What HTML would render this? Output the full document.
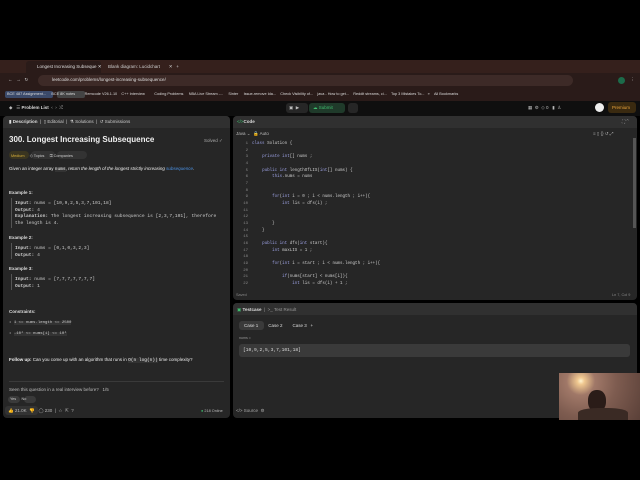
<!DOCTYPE html><html><head><style>
*{margin:0;padding:0;box-sizing:border-box}
body{width:640px;height:480px;background:#000;position:relative;overflow:hidden;font-family:"Liberation Sans",sans-serif;color:#ddd}
.a{position:absolute;white-space:nowrap}
.m{font-family:"Liberation Mono",monospace}
.p{background:#262626;border-radius:4px}
.t{font-size:4.5px}
</style></head><body>
<!-- browser chrome -->
<div class="a" style="left:0;top:60px;width:640px;height:13px;background:#35201c"></div>
<div class="a" style="left:26px;top:61px;width:75px;height:12px;background:#2a1b19;border-radius:3px 3px 0 0"></div>
<div class="a t" style="left:37px;top:64px;color:#ddd">Longest Increasing Subseque ✕</div>
<div class="a t" style="left:108px;top:64px;color:#ccc">Blank diagram: Lucidchart &nbsp;&nbsp;&nbsp;&nbsp;&nbsp;&nbsp;✕ &nbsp;&nbsp;+</div>
<div class="a" style="left:0;top:73px;width:640px;height:16px;background:#2a1b19"></div>
<div class="a" style="left:38px;top:75px;width:535px;height:11px;background:#3d2a27;border-radius:6px"></div>
<div class="a t" style="left:8px;top:77px;color:#ccc">←&nbsp;&nbsp;&nbsp;→&nbsp;&nbsp;&nbsp;↻</div>
<div class="a t" style="left:52px;top:77px;color:#ddd">leetcode.com/problems/longest-increasing-subsequence/</div>
<div class="a t" style="left:630px;top:77px;color:#ccc">⋮</div>
<div class="a" style="left:618px;top:77px;width:7px;height:7px;border-radius:50%;background:#1c6b4a"></div>
<div class="a" style="left:0;top:89px;width:640px;height:12px;background:#2a1b19"></div>
<div class="a" style="left:5px;top:91px;width:48px;height:7px;background:#3b4a6a;border-radius:2px"></div>
<div class="a" style="left:57px;top:91px;width:28px;height:7px;background:#444;border-radius:2px"></div>
<div class="a" style="font-size:3.8px;top:92px;left:7px;color:#ddd">BCE 487 Assignment... &nbsp;&nbsp;&nbsp;&nbsp;BCE 8K notes &nbsp;&nbsp;&nbsp;&nbsp;&nbsp;&nbsp;&nbsp;&nbsp;Remcode V26.1.10 &nbsp;&nbsp;&nbsp;C++ Interview &nbsp;&nbsp;&nbsp;&nbsp;&nbsp;&nbsp;&nbsp;&nbsp;Coding Problems &nbsp;&nbsp;&nbsp;&nbsp;NBA Live Stream -... &nbsp;&nbsp;&nbsp;&nbsp;Sinter &nbsp;&nbsp;&nbsp;&nbsp;Issue-remove Ida... &nbsp;&nbsp;&nbsp;Check Visibility of... &nbsp;&nbsp;&nbsp;java - How to get... &nbsp;&nbsp;&nbsp;Reddit streams, ci... &nbsp;&nbsp;&nbsp;Top 3 Mistakes To... &nbsp;&nbsp;» &nbsp;&nbsp;&nbsp;All Bookmarks</div>
<!-- leetcode topbar -->
<div class="a" style="left:0;top:101px;width:640px;height:15px;background:#0f0f0f"></div>
<div class="a t" style="left:9px;top:105px;color:#bbb">◆ &nbsp;&nbsp;☰ <b style="color:#ddd">Problem List</b> &nbsp;‹ &nbsp;› &nbsp;⤮</div>
<div class="a" style="left:286px;top:103px;width:22px;height:10px;background:#262626;border-radius:3px"></div>
<div class="a" style="left:309px;top:103px;width:36px;height:10px;background:#1f3a2a;border-radius:3px"></div>
<div class="a t" style="left:289px;top:105px;color:#bbb">▣ &nbsp;▶</div>
<div class="a t" style="left:313px;top:105px;color:#3fbf6f">☁ Submit</div>
<div class="a" style="left:348px;top:103px;width:10px;height:10px;background:#262626;border-radius:3px"></div>
<div class="a t" style="left:528px;top:105px;color:#bbb">▦ &nbsp;⚙ &nbsp;◇ 0 &nbsp;&nbsp;▮ &nbsp;♙</div>
<div class="a" style="left:595px;top:103px;width:9px;height:9px;background:#eee;border-radius:50%"></div>
<div class="a" style="left:608px;top:102px;width:28px;height:11px;background:#3a2a10;border-radius:3px"></div>
<div class="a t" style="left:612px;top:105px;color:#e8a33a">Premium</div>
<!-- left panel -->
<div class="a p" style="left:3px;top:116px;width:227px;height:302px"></div>
<div class="a" style="left:3px;top:116px;width:227px;height:12px;background:#303030;border-radius:4px 4px 0 0"></div>
<div class="a t" style="left:9px;top:119px;color:#ccc"><b style="color:#ddd">▮ Description</b> &nbsp;| &nbsp;▯ Editorial &nbsp;| &nbsp;⚗ Solutions &nbsp;| &nbsp;↺ Submissions</div>
<div class="a" style="left:9px;top:135px;font-size:8px;font-weight:bold;color:#eee">300. Longest Increasing Subsequence</div>
<div class="a t" style="left:204px;top:138px;color:#aaa">Solved ✓</div>
<div class="a" style="left:9px;top:151px;width:20px;height:8px;background:#3a3520;border-radius:4px"></div>
<div class="a" style="left:31px;top:151px;width:24px;height:8px;background:#333;border-radius:4px"></div>
<div class="a" style="left:57px;top:151px;width:30px;height:8px;background:#333;border-radius:4px"></div>
<div class="a" style="font-size:3.8px;left:11px;top:153px;color:#d9b13a">Medium <span style="color:#ccc">&nbsp;&nbsp;&nbsp;&nbsp;◇ Topics &nbsp;&nbsp;&nbsp;&nbsp;⚿ Companies</span></div>
<div class="a t" style="left:9px;top:166px;color:#eee">Given an integer array <span class="m" style="background:#333">nums</span>, <i>return the length of the longest strictly increasing <span style="color:#4a90e2">subsequence</span></i>.</div>
<div class="a t" style="left:9px;top:190px;font-weight:bold">Example 1:</div>
<div class="a" style="left:11px;top:198px;width:1px;height:30px;background:#555"></div>
<div class="a m" style="left:15px;top:201px;font-size:4.6px;line-height:6.7px;color:#ccc"><b>Input:</b> nums = [10,9,2,5,3,7,101,18]<br><b>Output:</b> 4<br><b>Explanation:</b> The longest increasing subsequence is [2,3,7,101], therefore<br>the length is 4.</div>
<div class="a t" style="left:9px;top:235px;font-weight:bold">Example 2:</div>
<div class="a" style="left:11px;top:243px;width:1px;height:16px;background:#555"></div>
<div class="a m" style="left:15px;top:246px;font-size:4.6px;line-height:6.7px;color:#ccc"><b>Input:</b> nums = [0,1,0,3,2,3]<br><b>Output:</b> 4</div>
<div class="a t" style="left:9px;top:266px;font-weight:bold">Example 3:</div>
<div class="a" style="left:11px;top:274px;width:1px;height:16px;background:#555"></div>
<div class="a m" style="left:15px;top:277px;font-size:4.6px;line-height:6.7px;color:#ccc"><b>Input:</b> nums = [7,7,7,7,7,7,7]<br><b>Output:</b> 1</div>
<div class="a t" style="left:9px;top:309px;font-weight:bold">Constraints:</div>
<div class="a m" style="left:9px;top:321px;font-size:4px;color:#ccc">• <span style="background:#333">1 &lt;= nums.length &lt;= 2500</span></div>
<div class="a m" style="left:9px;top:332px;font-size:4px;color:#ccc">• <span style="background:#333">-10⁴ &lt;= nums[i] &lt;= 10⁴</span></div>
<div class="a t" style="left:9px;top:357px;color:#eee"><b>Follow up:</b> Can you come up with an algorithm that runs in <span class="m" style="background:#333">O(n log(n))</span> time complexity?</div>
<div class="a" style="left:9px;top:381px;width:215px;height:1px;background:#3a3a3a"></div>
<div class="a t" style="left:9px;top:387px;color:#bbb">Seen this question in a real interview before? &nbsp;&nbsp;1/5</div>
<div class="a" style="left:8px;top:396px;width:12px;height:7px;background:#3a3a3a;border-radius:4px"></div>
<div class="a" style="left:24px;top:396px;width:12px;height:7px;background:#3a3a3a;border-radius:4px"></div>
<div class="a" style="font-size:3.8px;left:10px;top:397px;color:#ccc">Yes &nbsp;&nbsp;&nbsp;&nbsp;No</div>
<div class="a" style="left:5px;top:406px;width:33px;height:9px;background:#333;border-radius:3px"></div>
<div class="a t" style="left:8px;top:408px;color:#bbb">👍 21.0K &nbsp;👎 &nbsp;&nbsp;◯ 230 &nbsp;| &nbsp;☆ &nbsp;⇱ &nbsp;?</div>
<div class="a" style="font-size:3.8px;left:201px;top:409px;color:#bbb"><span style="color:#3fbf6f">●</span> 218 Online</div>
<!-- code panel -->
<div class="a p" style="left:233px;top:116px;width:404px;height:184px"></div>
<div class="a" style="left:233px;top:116px;width:404px;height:12px;background:#303030;border-radius:4px 4px 0 0"></div>
<div class="a t" style="left:237px;top:119px;color:#ddd"><span style="color:#3fbf6f">&lt;/&gt;</span><b>Code</b></div>
<div class="a t" style="left:622px;top:119px;color:#aaa">⛶ ⌃</div>
<div class="a t" style="left:236px;top:131px;color:#bbb">Java ⌄ &nbsp;🔒 Auto</div>
<div class="a t" style="left:593px;top:131px;color:#aaa">≡ ▯ {} ↺ ⤢</div>
<div class="a" style="left:633px;top:138px;width:3px;height:90px;background:#555"></div>
<div class="a m" style="left:236px;top:141px;width:12px;text-align:right;font-size:4px;line-height:6.67px;color:#888">1<br>2<br>3<br>4<br>5<br>6<br>7<br>8<br>9<br>10<br>11<br>12<br>13<br>14<br>15<br>16<br>17<br>18<br>19<br>20<br>21<br>22</div>
<div class="a m" style="left:252px;top:141px;font-size:4.2px;line-height:6.67px;color:#ccc;white-space:pre"><span style="color:#9a9fe0">class</span> Solution {

    <span style="color:#9a9fe0">private int</span>[] nums ;

    <span style="color:#9a9fe0">public int</span> lengthOfLIS(<span style="color:#9a9fe0">int</span>[] nums) {
        <span style="color:#9a9fe0">this</span>.nums = nums


        <span style="color:#9a9fe0">for</span>(<span style="color:#9a9fe0">int</span> i = 0 ; i &lt; nums.length ; i++){
            <span style="color:#9a9fe0">int</span> lis = dfs(i) ;


        }
    }

    <span style="color:#9a9fe0">public int</span> dfs(<span style="color:#9a9fe0">int</span> start){
        <span style="color:#9a9fe0">int</span> maxLIS = 1 ;

        <span style="color:#9a9fe0">for</span>(<span style="color:#9a9fe0">int</span> i = start ; i &lt; nums.length ; i++){

            <span style="color:#9a9fe0">if</span>(nums[start] &lt; nums[i]){
                <span style="color:#9a9fe0">int</span> lis = dfs(i) + 1 ;</div>
<div class="a" style="font-size:3.8px;left:236px;top:293px;color:#888">Saved</div>
<div class="a" style="font-size:3.8px;left:612px;top:293px;color:#888">Ln 7, Col 9</div>
<!-- testcase panel -->
<div class="a p" style="left:233px;top:303px;width:404px;height:115px"></div>
<div class="a" style="left:233px;top:303px;width:404px;height:12px;background:#303030;border-radius:4px 4px 0 0"></div>
<div class="a t" style="left:237px;top:307px;color:#ddd"><span style="color:#3fbf6f">▣</span> <b>Testcase</b> &nbsp;<span style="color:#999">| &nbsp;&gt;_ Test Result</span></div>
<div class="a" style="left:239px;top:321px;width:25px;height:9px;background:#3a3a3a;border-radius:3px"></div>
<div class="a t" style="left:244px;top:323px;color:#ddd">Case 1 &nbsp;&nbsp;&nbsp;&nbsp;&nbsp;&nbsp;&nbsp;Case 2 &nbsp;&nbsp;&nbsp;&nbsp;&nbsp;&nbsp;&nbsp;Case 3 &nbsp;&nbsp;+</div>
<div class="a" style="font-size:3.6px;left:239px;top:336px;color:#999">nums =</div>
<div class="a" style="left:239px;top:344px;width:391px;height:13px;background:#3a3a3a;border-radius:3px"></div>
<div class="a m" style="left:243px;top:348px;font-size:4.6px;color:#ddd">[10,9,2,5,3,7,101,18]</div>
<div class="a t" style="left:236px;top:408px;color:#aaa">&lt;/&gt; Source &nbsp;⚙</div>
<!-- webcam -->
<div class="a" style="left:559px;top:373px;width:81px;height:47px;background:radial-gradient(circle at 27% 17%,#fff4d0 0,#f0c890 5%,#a07868 20%,#7e5c50 50%,#5a4038 100%)"></div>
<div class="a" style="left:588px;top:390px;width:18px;height:22px;background:#2a1c18;border-radius:45%"></div>
<div class="a" style="left:578px;top:408px;width:50px;height:12px;background:#3a2a24;border-radius:40% 40% 0 0"></div>
</body></html>
